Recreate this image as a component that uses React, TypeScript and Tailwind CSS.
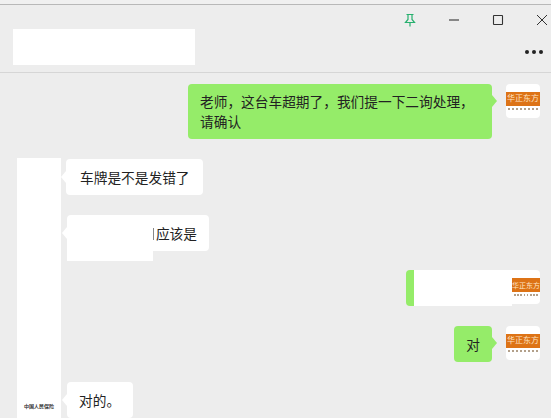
import React from 'react';

const FONT = "font-['Liberation_Sans','Noto_Sans_CJK_SC',sans-serif]";

const Logo: React.FC<{ cut?: boolean }> = ({ cut }) => (
  <div className="w-[34px] h-[34px] shrink-0 bg-white rounded-[4px] pt-[8px] flex flex-col items-end overflow-hidden">
    <div className={`${cut ? 'w-[28px]' : 'w-[34px]'} h-[14px] bg-[#dd7316] overflow-hidden flex items-center justify-center`}>
      <span className={`${cut ? 'text-[7px]' : 'text-[8px]'} leading-none text-[#fde3c4] whitespace-nowrap`}>华正东方</span>
    </div>
    <div className={`${cut ? 'w-[28px]' : 'w-[34px]'} mt-[2px] px-[2px] flex justify-between`}>
      {[0, 1, 2, 3, 4, 5, 6, 7].map((i) => (
        <span key={i} className="w-[1.5px] h-[1.5px] bg-[#b3a08a]"></span>
      ))}
    </div>
  </div>
);

const ArrowRight = () => (
  <span className="w-0 h-0 shrink-0 border-y-[6px] border-y-transparent border-l-[5px] border-l-[#95ec69]"></span>
);

const ArrowLeft = () => (
  <span className="w-0 h-0 shrink-0 border-y-[6px] border-y-transparent border-r-[5px] border-r-white"></span>
);

export default function App() {
  return (
    <div className={`${FONT} w-[551px] h-[418px] overflow-hidden bg-[#ededed] text-[#222] flex flex-col`}>
      <div className="h-[5px] shrink-0 bg-[#f0f0f0] border-b border-[#b8b8b8]"></div>

      <header className="h-[68px] shrink-0 border-b border-[#d6d6d6] flex items-start justify-between pl-[13px] pr-[8px]">
        <div className="w-[182px] h-[36px] mt-[24px] bg-white"></div>
        <div className="flex flex-col items-end">
          <div className="flex items-center h-[30px] gap-[30px]">
            <svg width="14" height="14" viewBox="0 0 14 14" fill="none" stroke="#27b06e" strokeWidth="1.2">
              <path d="M3.5 1.5h7M5 1.5v5L2.5 9.5h9L9 6.5v-5M7 9.5v4" />
            </svg>
            <svg width="14" height="14" viewBox="0 0 14 14" fill="none" stroke="#333" strokeWidth="1.1">
              <path d="M2 7h10" />
            </svg>
            <svg width="14" height="14" viewBox="0 0 14 14" fill="none" stroke="#333" strokeWidth="1.1">
              <rect x="2.5" y="2.5" width="9" height="9" rx="0.5" />
            </svg>
            <svg width="14" height="14" viewBox="0 0 14 14" fill="none" stroke="#333" strokeWidth="1" className="mr-[-6px]">
              <path d="M2 2l10 10M12 2L2 12" />
            </svg>
          </div>
          <div className="flex gap-[3px] mt-[15px]">
            <span className="w-[4px] h-[4px] rounded-full bg-[#222]"></span>
            <span className="w-[4px] h-[4px] rounded-full bg-[#222]"></span>
            <span className="w-[4px] h-[4px] rounded-full bg-[#222]"></span>
          </div>
        </div>
      </header>

      <main className="flex-1 min-h-0 flex flex-col text-[13.7px] leading-[20px]">
        <div className="flex justify-end items-start pt-[11px] pr-[11px]">
          <div className="w-[304px] h-[55px] bg-[#95ec69] rounded-[4px] px-[12px] pt-[9px]">
            老师，这台车超期了，我们提一下二询处理，
            <br />
            请确认
          </div>
          <div className="h-[34px] flex items-center mr-[9px]">
            <ArrowRight />
          </div>
          <Logo />
        </div>

        <div className="flex flex-1 min-h-0 mt-[19px] pl-[17px]">
          <div className="w-[44px] h-[260px] shrink-0 bg-white flex flex-col justify-end items-center pb-[9px]">
            <span className="text-[5px] leading-[5px] font-bold text-[#333] whitespace-nowrap">中国人民保险</span>
          </div>

          <div className="flex-1 flex flex-col pr-[11px]">
            <div className="flex items-center mt-[1px]">
              <div className="w-[5px] flex justify-end"><ArrowLeft /></div>
              <div className="w-[137px] h-[36px] bg-white rounded-[4px] flex items-center pl-[14px] pt-[4px] whitespace-nowrap">
                车牌是不是发错了
              </div>
            </div>

            <div className="flex items-start mt-[20px] h-[46px] relative">
              <div className="w-[6px] h-[36px] flex items-center justify-end"><ArrowLeft /></div>
              <div className="w-[142px] h-[36px] bg-white rounded-[4px] flex items-center justify-end pr-[12px] pt-[4px] whitespace-nowrap">
                应该是
              </div>
              <div className="absolute left-[6px] top-[10px] w-[86px] h-[36px] bg-white"></div>
              <div className="absolute left-[92px] top-[13px] w-px h-[12px] bg-[#888]"></div>
            </div>

            <div className="flex justify-end items-start mt-[10px]">
              <div className="w-[106px] h-[36px] rounded-l-[4px] bg-[#95ec69] mr-[-6px] pl-[8px] overflow-hidden relative z-10">
                <div className="w-[98px] h-[36px] bg-white"></div>
              </div>
              <Logo cut />
            </div>

            <div className="flex justify-end items-start mt-[20px]">
              <div className="w-[38px] h-[36px] bg-[#95ec69] rounded-[4px] flex items-center justify-center pt-[4px]">对</div>
              <div className="h-[34px] flex items-center mr-[9px]">
                <ArrowRight />
              </div>
              <Logo />
            </div>

            <div className="flex items-center mt-[20px]">
              <div className="w-[6px] flex justify-end"><ArrowLeft /></div>
              <div className="w-[66px] h-[36px] bg-white rounded-[4px] flex items-center pl-[12px] pt-[4px] whitespace-nowrap">
                对的。
              </div>
            </div>
          </div>
        </div>
      </main>
    </div>
  );
}
